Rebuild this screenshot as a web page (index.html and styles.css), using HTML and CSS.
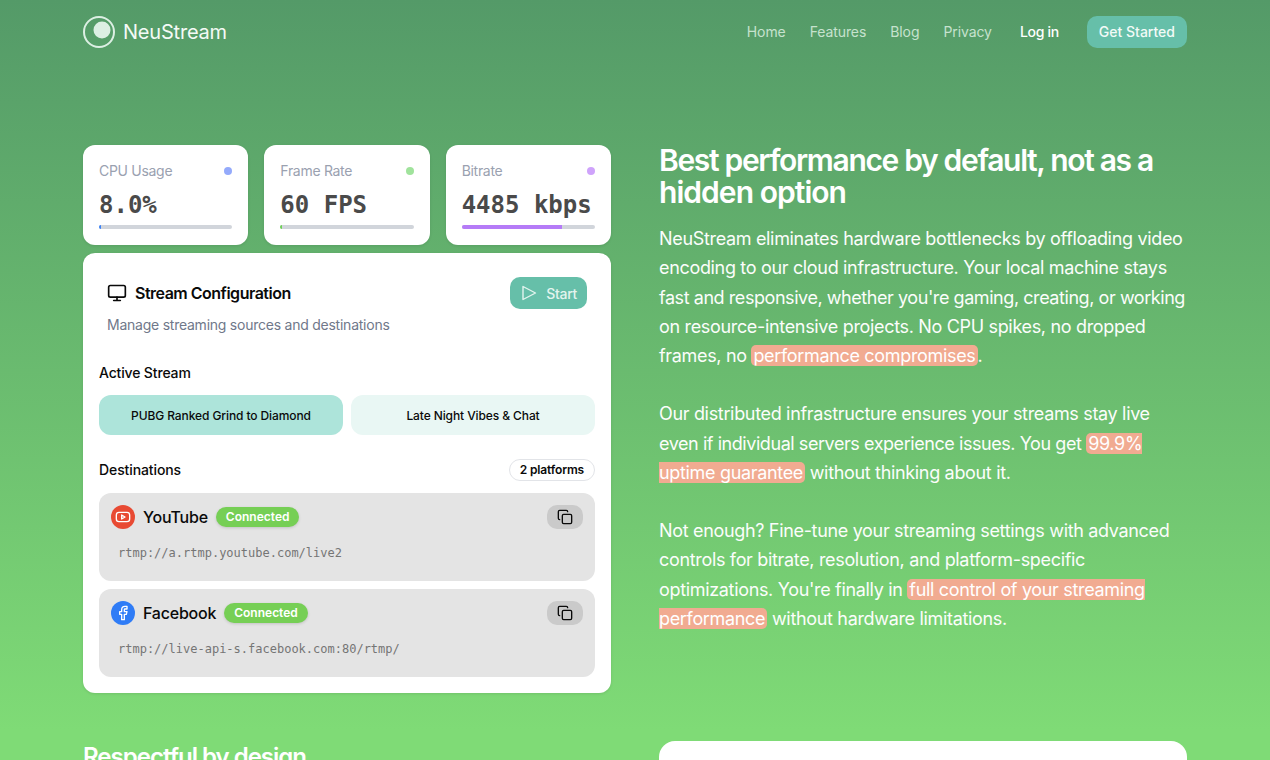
FILE: index.html
```html
<!DOCTYPE html>
<html lang="en">
<head>
<meta charset="utf-8">
<title>NeuStream</title>
<link rel="stylesheet" href="styles.css">
</head>
<body>
<div class="page">
  <header class="nav">
    <a class="brand">
      <svg class="brand-mark" width="32" height="32" viewBox="0 0 32 32"><circle cx="16" cy="16" r="15" fill="none" stroke="#dcefe3" stroke-width="2"/><circle cx="19" cy="14" r="8.500" fill="#dcefe3"/></svg>
      <span>NeuStream</span>
    </a>
    <nav class="nav-links">
      <a>Home</a><a>Features</a><a>Blog</a><a>Privacy</a>
    </nav>
    <a class="login">Log in</a>
    <a class="cta">Get Started</a>
  </header>

  <main class="grid">
    <section class="left">
      <div class="stats">
        <div class="stat">
          <div class="stat-head"><span>CPU Usage</span><i class="dot dot-blue"></i></div>
          <div class="stat-value">8.0%</div>
          <div class="bar"><div class="fill fill-blue" style="width:2px"></div></div>
        </div>
        <div class="stat">
          <div class="stat-head"><span>Frame Rate</span><i class="dot dot-green"></i></div>
          <div class="stat-value">60 FPS</div>
          <div class="bar"><div class="fill fill-green" style="width:2px"></div></div>
        </div>
        <div class="stat">
          <div class="stat-head"><span>Bitrate</span><i class="dot dot-purple"></i></div>
          <div class="stat-value">4485 kbps</div>
          <div class="bar"><div class="fill fill-purple" style="width:75%"></div></div>
        </div>
      </div>

      <div class="config">
        <div class="config-head">
          <div class="config-title">
            <svg width="20" height="20" viewBox="0 0 24 24" fill="none" stroke="#0a0a0a" stroke-width="2" stroke-linecap="round" stroke-linejoin="round"><rect x="2" y="3" width="20" height="14" rx="2"/><path d="M8 21h8M12 17v4"/></svg>
            <h3>Stream Configuration</h3>
          </div>
          <button class="start"><svg width="16" height="16" viewBox="0 0 16 16" fill="none" stroke="#e3f4ee" stroke-width="1.400" stroke-linejoin="round"><path d="M1 1.500L13.500 8 1 14.500z"/></svg><span>Start</span></button>
        </div>
        <p class="config-sub">Manage streaming sources and destinations</p>

        <div class="label">Active Stream</div>
        <div class="streams">
          <button class="stream stream-on">PUBG Ranked Grind to Diamond</button>
          <button class="stream">Late Night Vibes &amp; Chat</button>
        </div>

        <div class="dest-head">
          <div class="label label-tight">Destinations</div>
          <span class="pill">2 platforms</span>
        </div>

        <div class="dest">
          <div class="dest-row">
            <span class="pf pf-yt"><svg width="16" height="16" viewBox="0 0 24 24" fill="none" stroke="#fff" stroke-width="2" stroke-linejoin="round"><rect x="2" y="5" width="20" height="14" rx="4"/><path d="M10 9l5 3-5 3z"/></svg></span>
            <span class="dest-name">YouTube</span>
            <span class="badge">Connected</span>
            <button class="copy"><svg width="16" height="16" viewBox="0 0 24 24" fill="none" stroke="#0a0a0a" stroke-width="2" stroke-linecap="round" stroke-linejoin="round"><rect x="8" y="8" width="14" height="14" rx="2"/><path d="M4 16c-1.100 0-2-.9-2-2V4c0-1.100.9-2 2-2h10c1.100 0 2 .9 2 2"/></svg></button>
          </div>
          <div class="url">rtmp://a.rtmp.youtube.com/live2</div>
        </div>

        <div class="dest">
          <div class="dest-row">
            <span class="pf pf-fb"><svg width="16" height="16" viewBox="0 0 24 24" fill="none" stroke="#fff" stroke-width="2" stroke-linecap="round" stroke-linejoin="round"><path d="M18 2h-3a5 5 0 0 0-5 5v3H7v4h3v8h4v-8h3l1-4h-4V7a1 1 0 0 1 1-1h3z"/></svg></span>
            <span class="dest-name">Facebook</span>
            <span class="badge">Connected</span>
            <button class="copy"><svg width="16" height="16" viewBox="0 0 24 24" fill="none" stroke="#0a0a0a" stroke-width="2" stroke-linecap="round" stroke-linejoin="round"><rect x="8" y="8" width="14" height="14" rx="2"/><path d="M4 16c-1.100 0-2-.9-2-2V4c0-1.100.9-2 2-2h10c1.100 0 2 .9 2 2"/></svg></button>
          </div>
          <div class="url">rtmp://live-api-s.facebook.com:80/rtmp/</div>
        </div>
      </div>
    </section>

    <section class="right">
      <h2>Best performance by default, not as a <span class="h2-wide">hidden option</span></h2>
      <p>NeuStream eliminates hardware bottlenecks by offloading video encoding to our cloud infrastructure. Your local machine stays <span class="tight">fast and responsive, whether you're gaming, creating, or working</span> on resource-intensive projects. No CPU spikes, no dropped frames, no <mark>performance compromises</mark>.</p>
      <p>Our distributed infrastructure ensures your streams stay live <span class="tight">even if individual servers experience issues. You get</span> <mark>99.9% uptime guarantee</mark> without thinking about it.</p>
      <p>Not enough? Fine-tune your streaming settings with advanced controls for bitrate, resolution, and platform-specific optimizations. You're finally in <mark>full control of your streaming performance</mark> without hardware limitations.</p>
    </section>

    <section class="next-left"><h2>Respectful by design</h2></section>
    <section class="next-right"></section>
  </main>
</div>
</body>
</html>
```
FILE: styles.css
```css
* { box-sizing: border-box; }
html, body { margin: 0; height: 760px; overflow: hidden; }
body {
  font-family: Inter, "Liberation Sans", sans-serif;
  background: linear-gradient(180deg, #549a68 0, #7fdb76 730px, #7fdb76 100%);
  color: #fff;
}
.page { width: 1104px; margin: 0 auto; }
a { display: block; }

.nav { display: flex; align-items: center; height: 32px; margin-top: 16px; }
.brand { display: flex; align-items: center; gap: 8px; font-size: 20px; font-weight: 400; letter-spacing: -0.2px; color: #f4faf6; }
.nav-links { display: flex; gap: 24px; margin-left: auto; padding-bottom: 2px; font-size: 14px; letter-spacing: -0.09px; color: #c6e2ce; }
.login { margin-left: 28px; padding-bottom: 2px; font-size: 14px; font-weight: 500; letter-spacing: -0.3px; color: #fff; }
.cta { margin-left: 28px; height: 32px; padding: 0 12px; border-radius: 10px; background: #66bfa9; color: #f2faf7; font-size: 14px; font-weight: 500; line-height: 32px; }

.grid { display: grid; grid-template-columns: 528px 528px; column-gap: 48px; row-gap: 48px; margin-top: 97px; }

.stats { display: grid; grid-template-columns: repeat(3, 1fr); gap: 16px; }
.stat { height: 100px; background: #fff; border-radius: 12px; padding: 15px 16px 16px; box-shadow: 0 1px 3px rgba(0,0,0,.1); }
.stat-head { display: flex; justify-content: space-between; align-items: center; height: 20px; font-size: 14px; letter-spacing: -0.3px; color: #9aa1b0; }
.dot { width: 8px; height: 8px; margin-top: 2px; border-radius: 50%; }
.dot-blue { background: #94aafb; }
.dot-green { background: #a0e39c; }
.dot-purple { background: #cfa3fb; }
.stat-value { margin-top: 9px; height: 32px; font: 700 24px/32px "DejaVu Sans Mono", "Liberation Mono", monospace; color: #4a4a4a; white-space: nowrap; }
.bar { margin-top: 4px; height: 4px; border-radius: 2px; background: #d1d5db; overflow: hidden; }
.fill { height: 100%; }
.fill-blue { background: #3b82f6; }
.fill-green { background: #6fcf57; }
.fill-purple { background: #b57bf7; }

.config { margin-top: 8px; height: 440px; background: #fff; border-radius: 12px; padding: 24px 16px 16px; color: #0a0a0a; box-shadow: 0 1px 3px rgba(0,0,0,.1); }
.config-head { display: flex; justify-content: space-between; align-items: center; padding: 0 8px; height: 32px; }
.config-title { display: flex; align-items: center; gap: 8px; }
.config-title h3 { margin: 0; font-size: 16px; font-weight: 600; letter-spacing: -0.5px; }
.start { display: flex; align-items: center; gap: 8px; height: 32px; padding: 0 10px 0 12px; border: 0; border-radius: 10px; background: #66bfa9; color: #e3f4ee; font: 500 14px Inter, sans-serif; letter-spacing: -0.3px; }
.config-sub { margin: 6px 8px 0; font-size: 14px; line-height: 20px; letter-spacing: -0.24px; color: #70788a; }
.label { margin-top: 28px; font-size: 14px; font-weight: 500; line-height: 20px; letter-spacing: -0.15px; }
.label-tight { margin-top: 0; letter-spacing: -0.1px; }
.streams { display: grid; grid-template-columns: 1fr 1fr; gap: 8px; margin-top: 12px; }
.stream { height: 40px; border: 0; border-radius: 12px; background: #e9f7f4; color: #0a0a0a; font: 500 12px Inter, sans-serif; letter-spacing: -0.1px; }
.stream-on { background: #ade4da; }
.dest-head { display: flex; justify-content: space-between; align-items: center; margin-top: 24px; height: 22px; }
.pill { height: 22px; padding: 0 10px; border: 1px solid #e2e4e8; border-radius: 11px; font-size: 12px; font-weight: 600; line-height: 20px; letter-spacing: -0.15px; }
.dest { margin-top: 12px; height: 88px; padding: 12px; border-radius: 12px; background: #e4e4e4; }
.dest + .dest { margin-top: 8px; }
.dest-row { display: flex; align-items: center; height: 24px; }
.pf { display: flex; align-items: center; justify-content: center; width: 24px; height: 24px; border-radius: 50%; }
.pf-yt { background: #e84a33; }
.pf-fb { background: #2f7cf6; }
.dest-name { margin-left: 8px; font-size: 16px; font-weight: 500; letter-spacing: -0.22px; }
.badge { margin-left: 8px; height: 20px; padding: 0 10px; border-radius: 10px; background: #76cf55; color: #fff; font-size: 12px; font-weight: 600; line-height: 20px; box-shadow: 0 1px 3px rgba(0,0,0,.15); }
.copy { display: flex; align-items: center; justify-content: center; width: 36px; height: 24px; margin-left: auto; padding: 0; border: 0; border-radius: 10px; background: #cacaca; }
.url { margin: 16px 8px 0 7px; font: 400 12px/16px "DejaVu Sans Mono", "Liberation Mono", monospace; color: #757575; white-space: nowrap; }

.right h2 { margin: -1px 0 0; font-size: 30px; font-weight: 600; line-height: 32px; letter-spacing: -1.33px; color: #fff; }
.h2-wide { letter-spacing: -0.95px; }
.right p { margin: 0 0 29px; font-size: 18px; line-height: 29.250px; letter-spacing: -0.33px; color: #fbfdfb; }
.right h2 + p { margin-top: 16px; }
.tight { letter-spacing: -0.44px; }
mark { background: #f1ab91; color: #fff; border-radius: 5px; padding: 0 2px; }

.next-left h2 { margin: 0; font-size: 24px; font-weight: 600; line-height: 32px; letter-spacing: -1px; }
.next-right { height: 200px; background: #fff; border-radius: 16px; }
```
